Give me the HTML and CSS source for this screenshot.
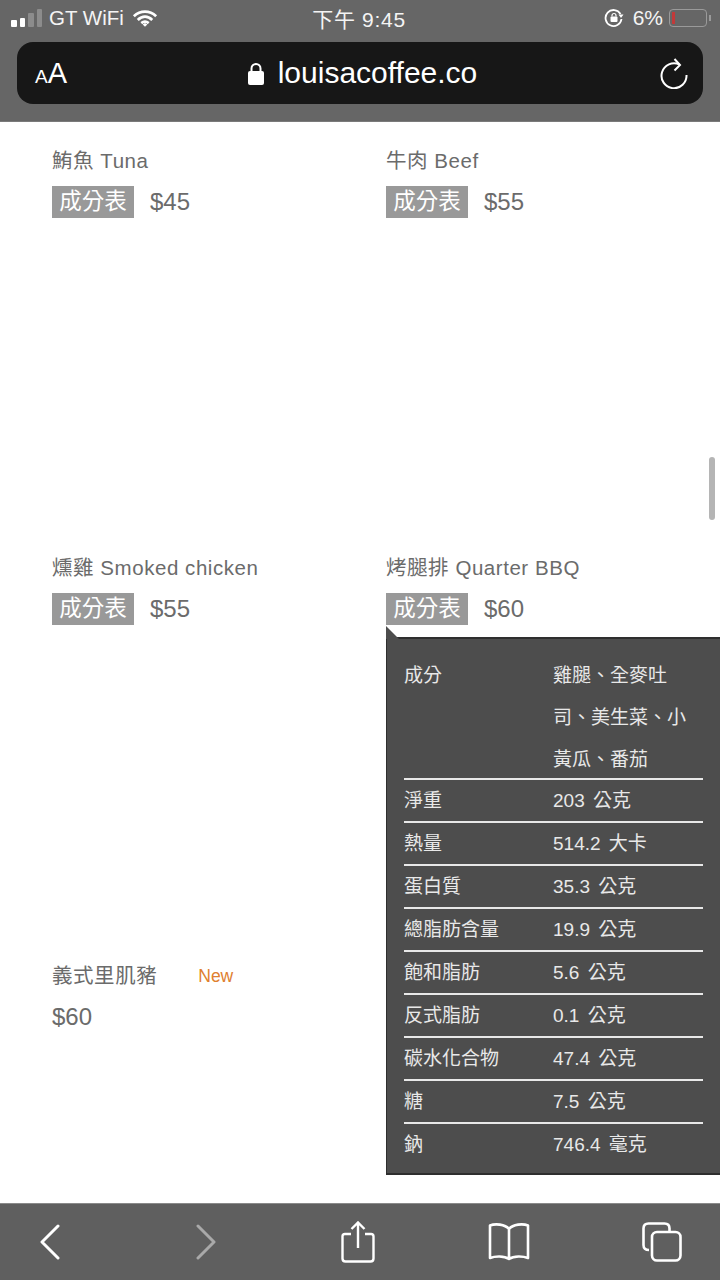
FILE: index.html
```html
<!DOCTYPE html>
<html>
<head>
  <meta charset="UTF-8">
  <title>Louisa Coffee</title>
  <link rel="stylesheet" href="styles.css">
</head>
<body>
  <!-- Status bar and address bar -->
  <header class="top-bar">
    <div class="status">
      <div class="status-left">
        <span class="signal"><i class="on s1"></i><i class="on s2"></i><i class="s3"></i><i class="s4"></i></span>
        <span class="carrier">GT WiFi</span>
        <svg class="wifi" width="26" height="19" viewBox="0 0 28 20"><path d="M2 7.500C9 1 19 1 26 7.500M6.200 11.500C11 7 17 7 21.800 11.500M10 15C12.500 13 15.500 13 18 15" fill="none" stroke="#fff" stroke-width="3"/><path d="M11.500 16.500L14 14.800L16.500 16.500L14 19Z" fill="#fff"/></svg>
      </div>
      <div class="status-time">下午 9:45</div>
      <div class="status-right">
        <svg width="20" height="20" viewBox="0 0 20 20"><path d="M16.500 6A8 8 0 1 0 17.500 11" fill="none" stroke="#fff" stroke-width="1.800"/><path d="M14.500 6.500L19.500 6.500L17 10Z" fill="#fff"/><rect x="6.500" y="8.500" width="7" height="5.500" rx="1" fill="#fff"/><path d="M8 8.500V7.500A2 2 0 0 1 12 7.500V8.500" fill="none" stroke="#fff" stroke-width="1.200"/></svg>
        <span class="pct">6%</span>
        <span class="battery"><i class="level"></i></span><i class="nub"></i>
      </div>
    </div>
    <div class="url-bar">
      <span class="aa"><small>A</small>A</span>
      <span class="url">
        <svg width="16" height="23" viewBox="0 0 16 23"><rect x="0" y="9" width="16" height="14" rx="2" fill="#fff"/><path d="M3.500 10V6.500A4.500 4.500 0 0 1 12.500 6.500V10" fill="none" stroke="#fff" stroke-width="2"/></svg>
        louisacoffee.co
      </span>
      <svg class="reload" width="30" height="32" viewBox="0 0 30 32"><path d="M20.500 7.500A12.500 12.500 0 1 0 27.500 18" fill="none" stroke="#fff" stroke-width="2"/><path d="M15.500 2L21 8L15.500 13.500" fill="none" stroke="#fff" stroke-width="2"/></svg>
    </div>
  </header>

  <!-- Menu items -->
  <main class="menu">
    <div class="item">
      <div class="name">鮪魚 Tuna</div>
      <div class="line"><span class="tag">成分表</span><span class="price">$45</span></div>
    </div>
    <div class="item">
      <div class="name">牛肉 Beef</div>
      <div class="line"><span class="tag">成分表</span><span class="price">$55</span></div>
    </div>
    <div class="item">
      <div class="name">燻雞 Smoked chicken</div>
      <div class="line"><span class="tag">成分表</span><span class="price">$55</span></div>
    </div>
    <div class="item">
      <div class="name">烤腿排 Quarter BBQ</div>
      <div class="line"><span class="tag">成分表</span><span class="price">$60</span></div>
      <!-- Nutrition popup -->
      <div class="popup">
        <span class="notch"></span>
        <table class="facts">
          <tr><td>成分</td><td><div class="long">雞腿、全麥吐司、美生菜、小黃瓜、番茄</div></td></tr>
          <tr><td>淨重</td><td>203 公克</td></tr>
          <tr><td>熱量</td><td>514.2 大卡</td></tr>
          <tr><td>蛋白質</td><td>35.3 公克</td></tr>
          <tr><td>總脂肪含量</td><td>19.9 公克</td></tr>
          <tr><td>飽和脂肪</td><td>5.6 公克</td></tr>
          <tr><td>反式脂肪</td><td>0.1 公克</td></tr>
          <tr><td>碳水化合物</td><td>47.4 公克</td></tr>
          <tr><td>糖</td><td>7.5 公克</td></tr>
          <tr><td>鈉</td><td>746.4 毫克</td></tr>
        </table>
      </div>
    </div>
    <div class="item">
      <div class="name name-new">義式里肌豬<span class="new">New</span></div>
      <div class="line line-plain"><span class="price price-plain">$60</span></div>
    </div>
    <span class="scrollbar"></span>
  </main>

  <!-- Bottom toolbar -->
  <footer class="toolbar">
    <svg width="20" height="36" viewBox="0 0 20 36"><path d="M18 2L2 18L18 34" fill="none" stroke="#fff" stroke-width="3" stroke-linecap="round" stroke-linejoin="round"/></svg>
    <svg class="fwd" width="20" height="36" viewBox="0 0 20 36"><path d="M2 2L18 18L2 34" fill="none" stroke="#a9a9a9" stroke-width="3" stroke-linecap="round" stroke-linejoin="round"/></svg>
    <svg class="share" width="34" height="42" viewBox="0 0 34 42"><path d="M10 13H4Q1.500 13 1.500 15.500V37.500Q1.500 40.500 4.500 40.500H29.500Q32.500 40.500 32.500 37.500V15.500Q32.500 13 30 13H24" fill="none" stroke="#fff" stroke-width="2.400"/><path d="M17 27V2M10.500 8L17 1.500L23.500 8" fill="none" stroke="#fff" stroke-width="2.400"/></svg>
    <svg class="book" width="42" height="38" viewBox="0 0 42 38"><path d="M21 6C17 1 7 0.500 2 2.500V35C7 33 16 32.500 21 36C26 32.500 35 33 40 35V2.500C35 0.500 25 1 21 6V36" fill="none" stroke="#fff" stroke-width="2.600" stroke-linejoin="round"/></svg>
    <svg class="tabs" width="40" height="40" viewBox="0 0 40 40"><path d="M7 28Q1.500 28 1.500 23V6.500Q1.500 1.500 6.500 1.500H22.500Q27.500 1.500 27.500 6.500V9" fill="none" stroke="#fff" stroke-width="2.600"/><rect x="10" y="10" width="28.500" height="28.500" rx="5" fill="none" stroke="#fff" stroke-width="2.600"/></svg>
  </footer>
</body>
</html>
```

FILE: styles.css
```css
* {
  box-sizing: border-box;
}

body {
  margin: 0;
  width: 720px;
  height: 1280px;
  display: flex;
  flex-direction: column;
  overflow: hidden;
  background: #fff;
  font-family: "Liberation Sans", "Noto Sans CJK TC", sans-serif;
}

/* Top bars */
.top-bar {
  flex: none;
  height: 122px;
  background: #666;
  border-bottom: 1px solid #7a7a7a;
  color: #fff;
}

.status {
  height: 42px;
  padding: 0 9px 6px 11px;
  display: flex;
  align-items: center;
  justify-content: space-between;
  font-size: 21px;
  color: #f4f4f4;
}

.status-left {
  width: 218px;
  display: flex;
  align-items: center;
}

.status-right {
  width: 222px;
  display: flex;
  align-items: center;
  justify-content: flex-end;
}

.carrier {
  margin-left: 7px;
  font-size: 20.500px;
}

.status-time {
  letter-spacing: .7px;
}

.wifi {
  margin-left: 8px;
}

.signal {
  display: flex;
  align-items: flex-end;
  gap: 3px;
  height: 18px;
}

.signal i {
  width: 5.500px;
  background: #8c8c8c;
  border-radius: 1px;
}

.signal .on {
  background: #fff;
}

.s1 { height: 7px; }
.s2 { height: 9px; }
.s3 { height: 14px; }
.s4 { height: 18px; }

.pct {
  margin: 0 6px 0 9px;
}

.battery {
  width: 38px;
  height: 18px;
  border: 1.500px solid #9a9a9a;
  border-radius: 4px;
  padding: 2px;
  display: flex;
}

.level {
  width: 3px;
  background: #c23a3a;
}

.nub {
  width: 2px;
  height: 6px;
  margin-left: 2px;
  background: #9a9a9a;
}

.url-bar {
  position: relative;
  height: 62px;
  margin: 0 17px;
  background: #171717;
  border-radius: 16px;
  display: flex;
  align-items: center;
  justify-content: center;
}

.aa {
  position: absolute;
  left: 18px;
  top: 15px;
  font-size: 29px;
  line-height: 32px;
}

.aa small {
  font-size: 19px;
}

.url {
  display: flex;
  align-items: center;
  gap: 14px;
  margin-left: 5px;
  font-size: 30px;
}

.reload {
  position: absolute;
  right: 14px;
  top: 15px;
}

/* Menu */
.menu {
  position: relative;
  flex: 1;
  min-height: 0;
  display: grid;
  grid-template-columns: 334px 334px;
  grid-template-rows: 406.500px 408px 1fr;
  padding: 24px 0 0 52px;
  color: #6b6b6b;
}

.item {
  position: relative;
}

.name {
  font-size: 20.500px;
  line-height: 30px;
  letter-spacing: .55px;
}

.line {
  display: flex;
  align-items: center;
  margin-top: 10px;
  height: 32px;
}

.tag {
  width: 82px;
  height: 32px;
  background: #999;
  color: #fff;
  text-align: center;
  font-size: 22.500px;
  line-height: 32px;
}

.price {
  margin-left: 16px;
  font-size: 24px;
}

.price-plain {
  margin: 0;
}

.name-new {
  display: flex;
  align-items: center;
}

.new {
  margin-left: 41px;
  font-size: 17.500px;
  letter-spacing: 0;
  color: #e0802f;
}

.line-plain {
  margin-top: 10px;
}

/* Popup */
.popup {
  position: absolute;
  left: 0;
  top: 84px;
  width: 334px;
  height: 538px;
  padding: 16px 17px 0;
  background: #4d4d4d;
  border: 1px solid #2e2e2e;
  border-bottom-width: 2px;
  border-right: 0;
  border-top: 2px solid #2e2e2e;
  color: #e8e8e8;
}

.notch {
  position: absolute;
  left: -1px;
  top: -13px;
  width: 0;
  height: 0;
  border-left: 13px solid #4d4d4d;
  border-bottom: 13px solid transparent;
  transform: scaleY(-1);
}

.facts {
  width: 299px;
  border-collapse: collapse;
  font-size: 19px;
}

.facts td {
  padding: 0;
  line-height: 42px;
  vertical-align: top;
}

.facts td:first-child {
  width: 149px;
}

.facts td + td {
  word-spacing: 3px;
}

.long {
  margin-bottom: -3px;
}

.facts tr + tr td {
  border-top: 2px solid #e8e8e8;
  padding-top: 1px;
  line-height: 40px;
}

.scrollbar {
  position: absolute;
  right: 5px;
  top: 335px;
  width: 6px;
  height: 63px;
  border-radius: 3px;
  background: #b5b5b5;
}

/* Bottom toolbar */
.toolbar {
  flex: none;
  height: 77px;
  background: #5f5f5f;
  border-top: 1px solid #8a8a8a;
  padding: 0 38px 0 40px;
  display: flex;
  align-items: center;
}

.fwd {
  margin-left: 136px;
}

.share {
  margin-left: 125px;
}

.book {
  margin-left: 113px;
}

.tabs {
  margin-left: auto;
}
```
